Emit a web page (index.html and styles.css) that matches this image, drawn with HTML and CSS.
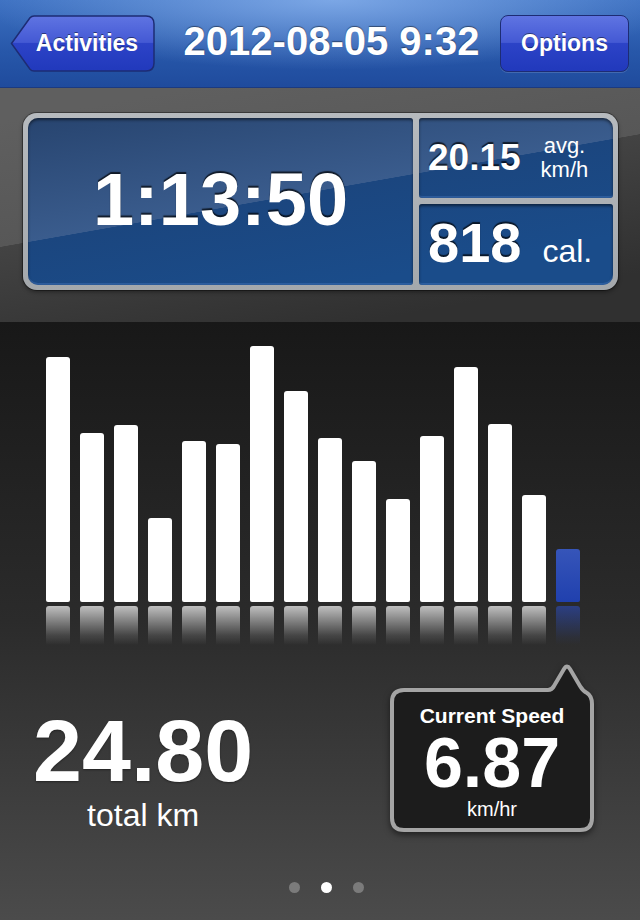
FILE: index.html
```html
<!DOCTYPE html>
<html lang="en">

<head>
  <meta charset="UTF-8">
  <meta name="viewport" content="width=device-width, initial-scale=1.0">
  <title>Activity 2012-08-05</title>
  <link rel="stylesheet" href="styles.css">
</head>

<body>
  <header class="navbar">
    <button class="navBtn backBtn">
      <svg class="btnShape" viewBox="0 0 145 57" width="145" height="57">
        <defs>
          <linearGradient id="btnFill" x1="0" y1="0" x2="0" y2="1">
            <stop offset="0" stop-color="#5f74e2" />
            <stop offset="0.48" stop-color="#4459d4" />
            <stop offset="0.5" stop-color="#2c43c7" />
            <stop offset="1" stop-color="#2139bc" />
          </linearGradient>
        </defs>
        <path d="M1.5 28.5 L20 2.8 Q21.5 1 24 1 H136 Q144 1 144 9 V48 Q144 56 136 56 H24 Q21.5 56 20 54.2 Z"
          fill="url(#btnFill)" stroke="#1d2c74" stroke-width="1.5" />
      </svg>
      <span class="btnLabel">Activities</span>
    </button>
    <h1 class="title">2012-08-05 9:32</h1>
    <button class="navBtn optionsBtn">Options</button>
  </header>

  <section class="stats">
    <div class="panel">
      <div class="cell timeCell">1:13:50</div>
      <div class="cell sideCell">
        <span class="sideNum">20.15</span>
        <span class="sideUnit">avg.<br>km/h</span>
      </div>
      <div class="cell sideCell">
        <span class="sideNum calNum">818</span>
        <span class="calUnit">cal.</span>
      </div>
    </div>
  </section>

  <section class="main">
    <div class="chart">
      <div class="bar" style="height: 245px"></div>
      <div class="bar" style="height: 169px"></div>
      <div class="bar" style="height: 177px"></div>
      <div class="bar" style="height: 84px"></div>
      <div class="bar" style="height: 161px"></div>
      <div class="bar" style="height: 158px"></div>
      <div class="bar" style="height: 256px"></div>
      <div class="bar" style="height: 211px"></div>
      <div class="bar" style="height: 164px"></div>
      <div class="bar" style="height: 141px"></div>
      <div class="bar" style="height: 103px"></div>
      <div class="bar" style="height: 166px"></div>
      <div class="bar" style="height: 235px"></div>
      <div class="bar" style="height: 178px"></div>
      <div class="bar" style="height: 107px"></div>
      <div class="bar current" style="height: 53px"></div>
    </div>
    <div class="mirror">
      <div class="shine"></div>
      <div class="shine"></div>
      <div class="shine"></div>
      <div class="shine"></div>
      <div class="shine"></div>
      <div class="shine"></div>
      <div class="shine"></div>
      <div class="shine"></div>
      <div class="shine"></div>
      <div class="shine"></div>
      <div class="shine"></div>
      <div class="shine"></div>
      <div class="shine"></div>
      <div class="shine"></div>
      <div class="shine"></div>
      <div class="shine current"></div>
    </div>

    <div class="summary">
      <div class="total">
        <div class="totalNum">24.80</div>
        <div class="totalUnit">total km</div>
      </div>
      <div class="bubble">
        <svg class="bubbleShape" viewBox="0 0 212 180" width="212" height="180">
          <path d="M18 30 H162 Q166 30 168 26 L178 9 Q181 4 184 9 L194 26 Q197 31 201 33 Q206 36 206 44 V158 Q206 170 194 170 H18 Q6 170 6 158 V42 Q6 30 18 30 Z"
            fill="#1c1c1c" stroke="#a4a4a4" stroke-width="4" />
        </svg>
        <div class="speedLabel">Current Speed</div>
        <div class="speedNum">6.87</div>
        <div class="speedUnit">km/hr</div>
      </div>
    </div>

    <div class="dots">
      <span class="dot"></span>
      <span class="dot active"></span>
      <span class="dot"></span>
    </div>
  </section>
</body>

</html>
```

FILE: styles.css
```css
body {
  margin: 0;
  width: 640px;
  height: 920px;
  overflow: hidden;
  background-color: #191919;
  font-family: "Liberation Sans", Arial, sans-serif;
  color: #fff;
}

/* top bar */
.navbar {
  height: 87px;
  border-bottom: 1px solid #1b3a80;
  padding: 0 11px 0 10px;
  display: flex;
  align-items: center;
  background:
    radial-gradient(ellipse 55% 80% at 52% 0%, rgba(150, 190, 245, 0.7), rgba(150, 190, 245, 0) 100%),
    linear-gradient(#3c70c1, #2757a9 60%, #1f4b9d);
}

.navBtn {
  height: 57px;
  padding: 0;
  border: none;
  color: #fff;
  font-family: "Liberation Sans", Arial, sans-serif;
  font-size: 23px;
  font-weight: 700;
  text-shadow: 0 -1px 0 rgba(0, 0, 0, 0.45);
  cursor: pointer;
}

.backBtn {
  position: relative;
  width: 145px;
  background: none;
  display: flex;
  align-items: center;
  justify-content: center;
  padding-left: 9px;
}

.btnShape {
  position: absolute;
  top: 0;
  left: 0;
}

.btnLabel {
  position: relative;
}

.optionsBtn {
  width: 129px;
  border: 1.5px solid #1d2c74;
  border-radius: 8px;
  background: linear-gradient(#5f74e2, #4459d4 48%, #2c43c7 50%, #2139bc);
  box-shadow: 0 1px 0 rgba(255, 255, 255, 0.15);
}

.title {
  flex: 1;
  margin: 0 0 5px 0;
  padding-left: 8px;
  text-align: center;
  font-size: 40px;
  line-height: 1;
  font-weight: 700;
  text-shadow: 0 -1px 1px rgba(0, 0, 0, 0.45);
}

/* stats panel */
.stats {
  height: 209px;
  padding: 25px 0 0 23px;
  background: linear-gradient(170deg, #5f5f5f 120px, #575757 243px, #434343 243.5px, #303030 380px) fixed;
}

.panel {
  width: 585px;
  height: 167px;
  padding: 5px;
  border-radius: 14px;
  background: linear-gradient(#b6babe, #a4a8ac);
  box-shadow: 0 0 0 1px rgba(0, 0, 0, 0.35), 0 2px 4px rgba(0, 0, 0, 0.4);
  display: grid;
  grid-template-columns: 385px 194px;
  grid-template-rows: 80px 81px;
  gap: 6px;
}

.cell {
  background: linear-gradient(170deg, #27446f 120px, #3a5c8d 243px, #1b467f 243.5px, #1a4c8a 340px) fixed;
  box-shadow: inset 0 2px 3px rgba(0, 0, 0, 0.5), inset 0 -2px 0 rgba(80, 130, 200, 0.35);
  font-weight: 700;
  text-shadow: 0 -2px 1px rgba(0, 0, 0, 0.7);
}

.timeCell {
  grid-row: 1 / 3;
  border-radius: 10px 3px 3px 10px;
  display: flex;
  align-items: center;
  justify-content: center;
  padding-bottom: 4px;
  font-size: 74px;
}

.sideCell {
  display: flex;
  align-items: center;
  padding-left: 9px;
  border-radius: 3px 10px 3px 3px;
}

.sideCell:last-child {
  border-radius: 3px 3px 10px 3px;
  align-items: baseline;
  padding-top: 6px;
}

.sideNum {
  font-size: 37px;
}

.calNum {
  font-size: 56px;
}

.sideUnit {
  margin-left: 20px;
  font-size: 22px;
  line-height: 24px;
  font-weight: 400;
  text-align: center;
  text-shadow: none;
}

.calUnit {
  margin-left: 21px;
  font-size: 32px;
  font-weight: 400;
  text-shadow: none;
}

/* chart area */
.main {
  height: 598px;
  background: linear-gradient(#181818, #2b2b2b 50%, #4b4b4b);
}

.chart {
  height: 280px;
  padding-left: 46px;
  display: flex;
  align-items: flex-end;
  gap: 10px;
}

.bar {
  width: 24px;
  border-radius: 3px 3px 2px 2px;
  background-color: #fff;
}

.bar.current {
  background: linear-gradient(#3655b9, #2040ae);
}

.mirror {
  margin-top: 4px;
  padding-left: 46px;
  display: flex;
  gap: 10px;
}

.shine {
  width: 24px;
  height: 39px;
  border-radius: 3px 3px 0 0;
  background: linear-gradient(rgba(255, 255, 255, 0.7), rgba(255, 255, 255, 0.12) 75%, rgba(255, 255, 255, 0));
}

.shine.current {
  background: linear-gradient(rgba(44, 70, 160, 0.75), rgba(44, 70, 160, 0.1) 80%, rgba(44, 70, 160, 0));
}

/* totals and current speed */
.summary {
  margin-top: 15px;
  padding: 0 42px 0 33px;
  display: flex;
  justify-content: space-between;
  align-items: flex-start;
}

.total {
  margin-top: 47px;
  text-align: center;
}

.totalNum {
  font-size: 88px;
  line-height: 1;
  font-weight: 700;
  text-shadow: 0 1px 2px rgba(0, 0, 0, 0.4);
}

.totalUnit {
  margin-top: 4px;
  font-size: 32px;
  line-height: 1;
}

.bubble {
  position: relative;
  width: 212px;
  height: 180px;
  box-sizing: border-box;
  padding-top: 45px;
  text-align: center;
}

.bubbleShape {
  position: absolute;
  top: 0;
  left: 0;
  filter: drop-shadow(0 3px 3px rgba(0, 0, 0, 0.5));
}

.speedLabel,
.speedNum,
.speedUnit {
  position: relative;
  line-height: 1;
}

.speedLabel {
  font-size: 21px;
  font-weight: 700;
}

.speedNum {
  margin-top: 2px;
  font-size: 70px;
  font-weight: 700;
}

.speedUnit {
  margin-top: 1px;
  font-size: 20px;
}

.dots {
  margin-top: 42px;
  padding-left: 12px;
  display: flex;
  justify-content: center;
  gap: 21px;
}

.dot {
  width: 11px;
  height: 11px;
  border-radius: 50%;
  background-color: #7b7b7b;
}

.dot.active {
  background-color: #fff;
}
```
